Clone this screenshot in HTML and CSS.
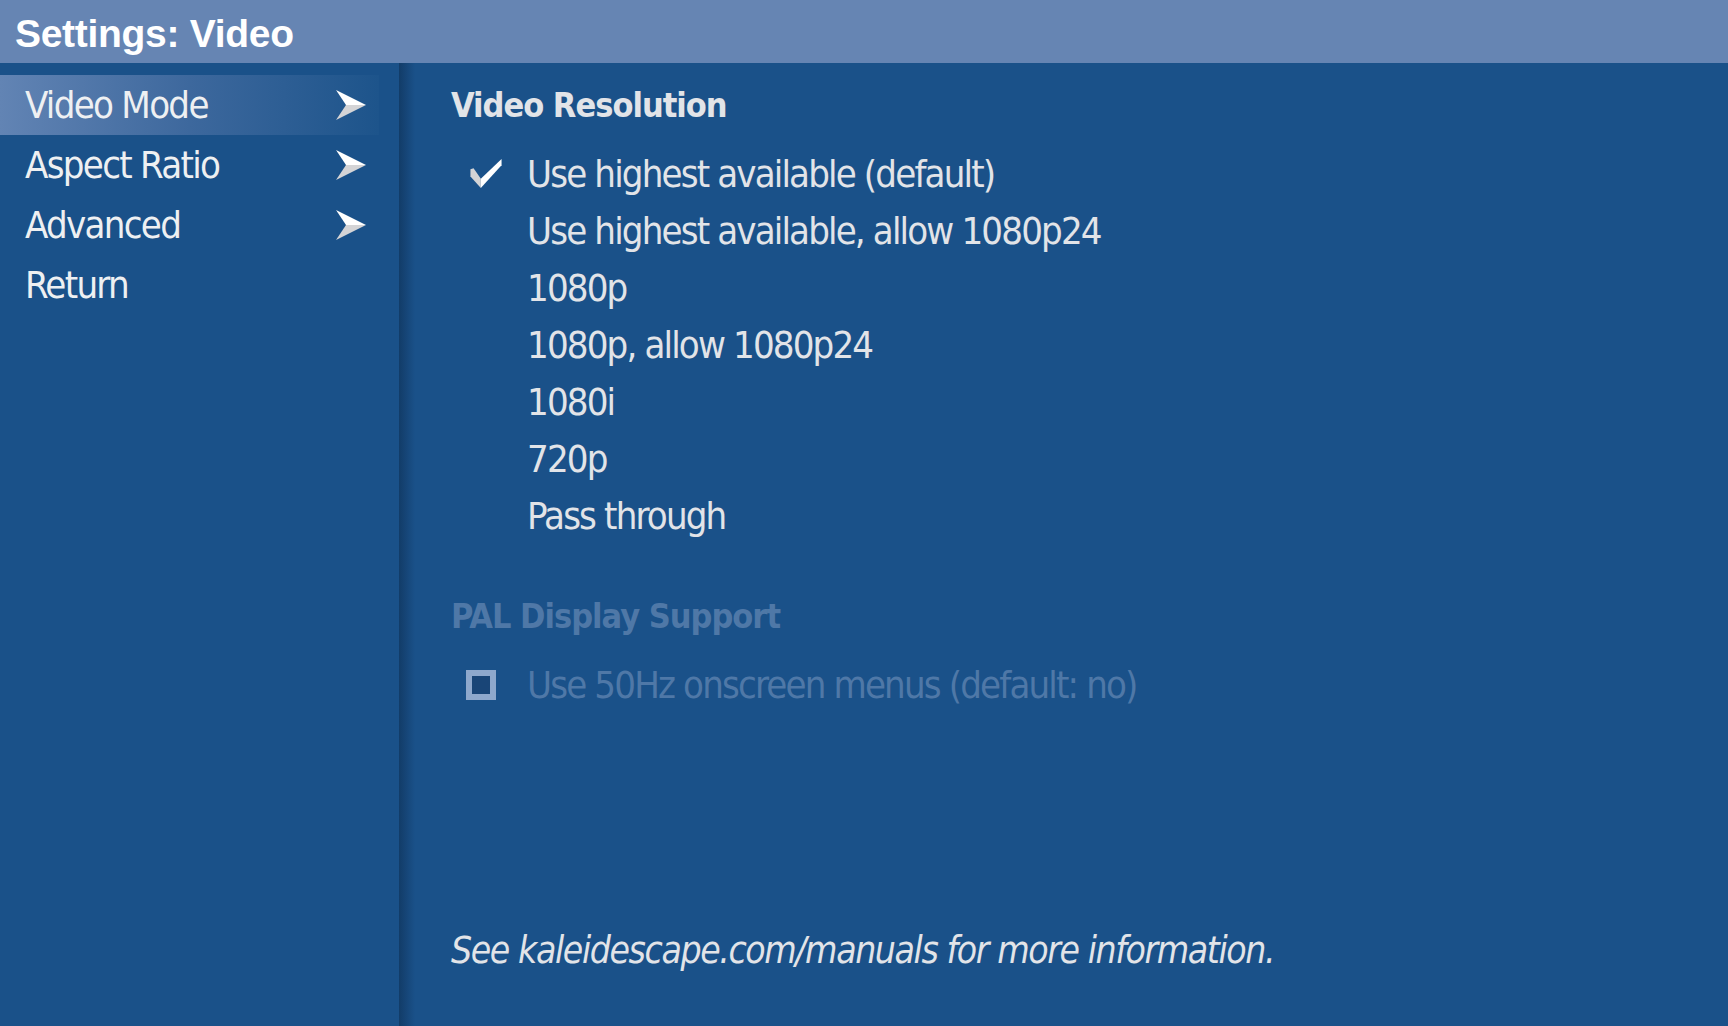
FILE: index.html
```html
<!DOCTYPE html>
<html lang="en">
<head>
    <meta charset="UTF-8">
    <meta name="viewport" content="width=device-width, initial-scale=1.0">
    <title>Settings: Video</title>
    <link rel="stylesheet" href="styles.css">
</head>
<body>
    <header class="topbar">
        <h1>Settings: Video</h1>
    </header>

    <main class="screen">
        <nav class="sidebar">
            <ul>
                <li class="menu-item selected">
                    <span>Video Mode</span>
                    <svg class="arrow" width="30" height="30" viewBox="0 0 30 30">
                        <polygon points="0,0 30,15 10,15" fill="#ffffff"/>
                        <polygon points="0,30 30,15 10,15" fill="#d4d4d6"/>
                    </svg>
                </li>
                <li class="menu-item">
                    <span>Aspect Ratio</span>
                    <svg class="arrow" width="30" height="30" viewBox="0 0 30 30">
                        <polygon points="0,0 30,15 10,15" fill="#ffffff"/>
                        <polygon points="0,30 30,15 10,15" fill="#d4d4d6"/>
                    </svg>
                </li>
                <li class="menu-item">
                    <span>Advanced</span>
                    <svg class="arrow" width="30" height="30" viewBox="0 0 30 30">
                        <polygon points="0,0 30,15 10,15" fill="#ffffff"/>
                        <polygon points="0,30 30,15 10,15" fill="#d4d4d6"/>
                    </svg>
                </li>
                <li class="menu-item">
                    <span>Return</span>
                </li>
            </ul>
        </nav>

        <section class="content">
            <h2 class="group-title">Video Resolution</h2>
            <ul class="options">
                <li class="option">
                    <span class="mark">
                        <svg width="32" height="29" viewBox="0 0 30 28">
                            <polygon points="0,10 3,9 10,19 10,28 0,17" fill="#d4d4d6"/>
                            <polygon points="10,19 30,0 30,6 10,28" fill="#ffffff"/>
                        </svg>
                    </span>
                    Use highest available (default)
                </li>
                <li class="option"><span class="mark"></span>Use highest available, allow 1080p24</li>
                <li class="option"><span class="mark"></span>1080p</li>
                <li class="option"><span class="mark"></span>1080p, allow 1080p24</li>
                <li class="option"><span class="mark"></span>1080i</li>
                <li class="option"><span class="mark"></span>720p</li>
                <li class="option"><span class="mark"></span>Pass through</li>
            </ul>

            <h2 class="group-title disabled">PAL Display Support</h2>
            <ul class="options">
                <li class="option disabled">
                    <span class="mark"><span class="checkbox"></span></span>
                    Use 50Hz onscreen menus (default: no)
                </li>
            </ul>

            <p class="footnote">See kaleidescape.com/manuals for more information.</p>
        </section>
    </main>
</body>
</html>
```

FILE: styles.css
```css
html, body{
    margin: 0;
    height: 100%;
}

body{
    display: flex;
    flex-direction: column;
    background-color: #1a5189;
    color: #e2e4e8;
    font-family: "Liberation Sans Narrow", "DejaVu Sans Condensed", "Roboto Condensed", "Liberation Sans", sans-serif;
    overflow: hidden;
}

ul{
    list-style: none;
    margin: 0;
    padding: 0;
}

.topbar{
    height: 63px;
    box-sizing: border-box;
    background-color: #6685b3;
    display: flex;
    align-items: center;
    padding: 5px 0 0 15px;
}

.topbar h1{
    margin: 0;
    font-family: "Liberation Sans", Arial, sans-serif;
    font-weight: bold;
    font-size: 39px;
    color: #ffffff;
    letter-spacing: -0.3px;
}

.screen{
    flex: 1;
    display: grid;
    grid-template-columns: 399px 1fr;
}

.sidebar{
    padding-top: 12px;
}

.menu-item{
    height: 60px;
    display: flex;
    align-items: center;
    justify-content: space-between;
    padding: 0 33px 0 25px;
    font-size: 38px;
    letter-spacing: -1.7px;
    color: #eef0f2;
}

.menu-item.selected{
    background: linear-gradient(to right, #6284b4 0%, #3d689d 50%, #1d548b 100%);
    margin-right: 20px;
    padding-right: 13px;
}

.content{
    padding: 20px 0 0 52px;
    background: linear-gradient(to right, #123c68 0px, #17497d 10px, #1a5189 16px);
}

.group-title{
    margin: 0 0 18px;
    font-size: 34px;
    line-height: 44px;
    font-weight: bold;
    color: #e2e4e8;
    letter-spacing: -1px;
}

.group-title.disabled{
    color: #4f78a7;
    margin-top: 50px;
}

.option{
    height: 57px;
    display: flex;
    align-items: center;
    font-size: 38px;
    letter-spacing: -1.85px;
    color: #e2e4e8;
}

.option.disabled{
    color: #4f78a7;
}

.mark{
    width: 76px;
    display: flex;
    align-items: center;
    padding-left: 19px;
    box-sizing: border-box;
}

.checkbox{
    display: block;
    width: 18px;
    height: 18px;
    border: 6px solid #8ea8cc;
    background-color: #194577;
    margin-left: -4px;
}

.footnote{
    margin: 215px 0 0;
    font-size: 37px;
    line-height: 46px;
    font-style: italic;
    letter-spacing: -1.4px;
    color: #e2e4e8;
}
```
